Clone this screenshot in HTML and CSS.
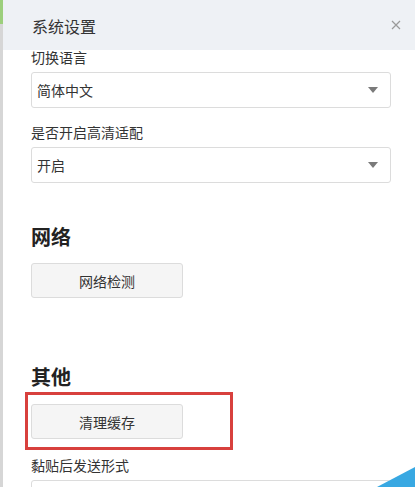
FILE: index.html
```html
<!DOCTYPE html>
<html lang="zh-CN">
  <head>
    <meta charset="UTF-8" />
    <meta name="viewport" content="width=device-width, initial-scale=1.0" />
    <title>系统设置</title>
    <link rel="stylesheet" href="styles.css">
  </head>
  <body>
    <div class="page">
      <div class="side"></div>

      <div class="modal">
        <div class="modal-head">
          <span class="modal-title">系统设置</span>
          <svg class="close" width="10" height="10" viewBox="0 0 10 10">
            <path d="M1 1 L9 9 M9 1 L1 9" stroke="#9a9a9a" stroke-width="1.2" fill="none" />
          </svg>
        </div>

        <div class="modal-body">
          <p class="label first">切换语言</p>
          <div class="select">
            <span>简体中文</span>
            <i class="caret"></i>
          </div>

          <p class="label">是否开启高清适配</p>
          <div class="select">
            <span>开启</span>
            <i class="caret"></i>
          </div>

          <h2 class="section">网络</h2>
          <button class="btn">网络检测</button>

          <h2 class="section other">其他</h2>
          <div class="marked">
            <button class="btn">清理缓存</button>
          </div>

          <p class="label paste">黏贴后发送形式</p>
          <div class="select"></div>
        </div>
      </div>
    </div>

    <div class="corner"></div>
  </body>
</html>
```

FILE: styles.css
```css
html,
body {
  margin: 0;
  height: 100%;
  overflow: hidden;
  background: #ffffff;
}
body {
  font-family: "Noto Sans CJK SC", "Noto Sans", sans-serif;
  color: #333333;
  font-size: 14px;
}

.page {
  display: flex;
  min-height: 100%;
}
.side {
  width: 3px;
  flex: none;
  background: linear-gradient(to bottom, #9ccf7c 0, #9ccf7c 24px, #d6d6d6 24px, #d6d6d6 100%);
}
.modal {
  flex: 1;
  background: #ffffff;
}

.modal-head {
  height: 50px;
  background: #eef1f5;
  display: flex;
  align-items: center;
  justify-content: space-between;
  padding: 0 14px 0 29px;
}
.modal-title {
  font-size: 16px;
  line-height: 50px;
  padding-top: 2px;
  color: #333333;
}
.close {
  display: block;
}

.modal-body {
  padding: 0 24px 0 28px;
}

.label {
  margin: 17px 0 8px;
  line-height: 14px;
  font-size: 14px;
  color: #333333;
}
.label.first {
  margin-top: 0;
}
.label.paste {
  margin-top: 19px;
}

.select {
  height: 36px;
  box-sizing: border-box;
  border: 1px solid #dcdcdc;
  border-radius: 3px;
  display: flex;
  align-items: center;
  justify-content: space-between;
  padding: 0 12px 0 5px;
  font-size: 14px;
  color: #333333;
}
.caret {
  width: 0;
  height: 0;
  border-left: 5px solid transparent;
  border-right: 5px solid transparent;
  border-top: 6px solid #7a7a7a;
}

.section {
  margin: 40px 0 12px;
  font-size: 20px;
  line-height: 28px;
  font-weight: bold;
  color: #222222;
}
.section.other {
  margin-top: 65px;
}

.btn {
  display: block;
  width: 152px;
  height: 35px;
  box-sizing: border-box;
  background: #f5f5f5;
  border: 1px solid #dcdcdc;
  border-radius: 3px;
  font-family: inherit;
  font-size: 14px;
  color: #333333;
  padding: 0;
}

.marked {
  position: relative;
  width: 152px;
  margin-top: 13px;
}
.marked::after {
  content: "";
  position: absolute;
  top: -12px;
  left: -6px;
  right: -50px;
  bottom: -11px;
  border: 3px solid #d8403d;
}

.corner {
  position: fixed;
  right: 0;
  bottom: 0;
  width: 38px;
  height: 20px;
  background: #38a8e2;
  clip-path: polygon(100% 0, 100% 100%, 0 100%);
}
```
